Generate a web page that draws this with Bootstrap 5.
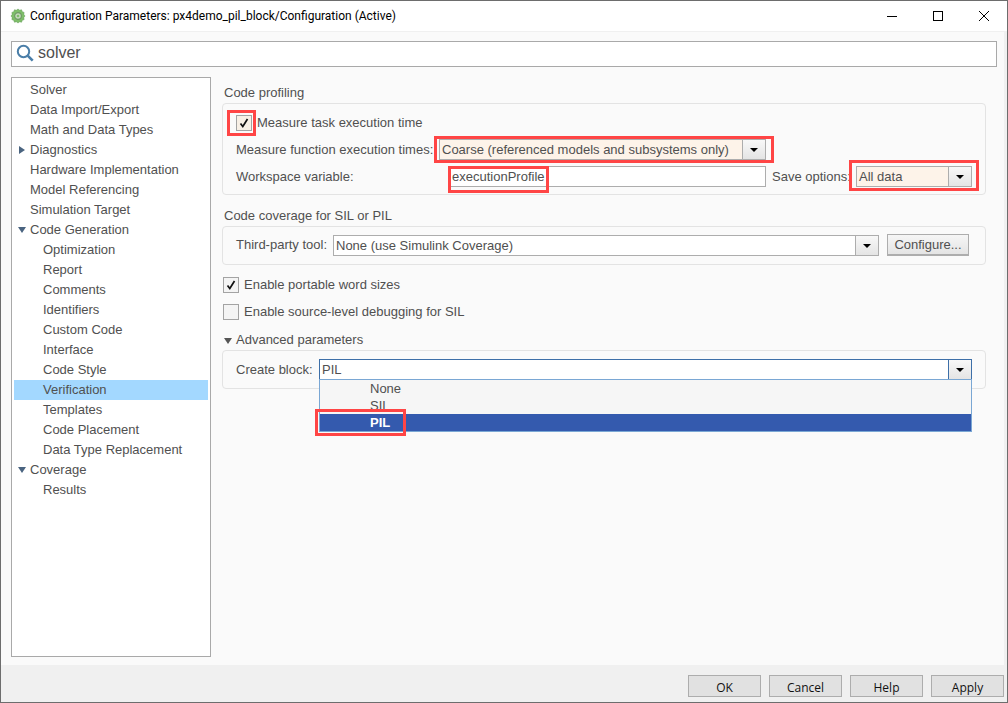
<!DOCTYPE html>
<html lang="en">
<head>
<meta charset="utf-8">
<title>Configuration Parameters</title>
<link rel="stylesheet" href="https://cdn.jsdelivr.net/npm/bootstrap@5.3.0/dist/css/bootstrap.min.css">
<style>
html,body{height:703px;overflow:hidden;background:#fff}
body{font:13px/20px "Liberation Sans",Arial,sans-serif;color:#505050}
.win{width:1008px;height:703px;border:1px solid #6d6d6d;background:#f0f0f0}
.tbar{height:30px;background:#fff;padding:0 0 0 9px;font:12px Roboto,"Noto Sans",sans-serif;color:#000}
.tbar .ttl{margin-left:4px}
.wbtn{width:46px;height:30px}
.fx0{flex:none}
.mainp{height:634px;margin:1px 3px 0 0;background:#fafafa;padding:9px 7px 8px 10px}
.srch{height:26px;border:1px solid #a9a9a9;background:#fff;padding-left:4px;padding-bottom:2px;gap:4px;font-size:16px;color:#505050}
.cols{margin-top:10px;gap:11px;height:580px}
.tree{width:200px;height:580px;border:1px solid #a9a9a9;background:#fff;padding:2px;flex:none}
.tree .list-group-item{border:0;border-radius:0;padding:0 0 0 16px;height:20px;line-height:20px;background:transparent;color:#505050;font-size:13px;position:relative}
.tree .list-group-item.lv2{padding-left:29px}
.tree .list-group-item.sel{background:#a3d8ff}
.tw{position:absolute;left:4px;top:6px;width:8px;height:8px}
.pane{width:764px;flex:none;padding-top:5px}
.lgd{height:20px;line-height:22px;padding-left:2px}
.grp{border:1px solid #e3e3e3;border-radius:4px;background:#fafafa;padding:0 13px}
.g1{height:92px;margin-top:1px}
.g2{height:39px;margin-top:1px;padding-top:8px}
.g3{height:39px;margin-top:1px;padding-top:8px}
.lg2{margin-top:10px}
.rw{display:flex;align-items:center}
.r1{height:20px;margin-top:9px}
.r2{height:21px;margin-top:6px}
.r3{height:21px;margin-top:6px}
.cb{width:16px;height:16px;border:1px solid #a3a3a3;background:#f4f4f4;display:inline-flex;align-items:center;justify-content:center;flex:none;position:relative}
.cb.warm{background:#f8f0e6}
.gap5{margin-left:5px}
.combo{display:flex;height:21px;border:1px solid #adadad;background:#fff;flex:none;position:relative}
.combo.warm .val{background:#fdf3e9}
.val{flex:1;padding-left:2px;line-height:19px;font-size:13px;color:#505050;white-space:nowrap}
.arr{width:23px;border-left:1px solid #adadad;background:linear-gradient(#f8f8f8,#e4e4e4);display:flex;align-items:center;justify-content:center;flex:none}
.arr i{display:block;width:0;height:0;border:4px solid transparent;border-top:4px solid #000;border-bottom:0;margin-top:1px}
.tinp{height:21px;border:1px solid #adadad;background:#fff;padding:0 0 0 1px;font-size:13px;color:#505050;border-radius:0;line-height:19px;flex:none;position:relative}
.cfg{width:82px;height:22px;border:1px solid #adadad;border-bottom-width:2px;border-radius:0;background:linear-gradient(#f6f6f6,#e4e4e4);font-size:13px;line-height:18px;padding:0;color:#505050;margin-left:8px}
.ck{height:16px}
.ck1{margin-top:12px}
.ck2{margin-top:11px}
.ck .cb{margin-left:1px;margin-right:5px}
.lg3{margin-top:9px;padding-left:2px}
.lg3 svg{margin-right:4px}
.ddown{position:absolute;left:-1px;top:19px;width:653px;height:53px;border:1px solid #7aa7d4;background:#f6f6f6;z-index:5;font-size:13px}
.ddown div{height:17px;line-height:17px;padding-left:50px}
.ddown .d3{background:#345aae;color:#fff;font-weight:700}
.blue{border-color:#3d6fa8}
.blue .arr{border-left-color:#3d6fa8}
.hl{position:absolute;border:3px solid #ff4545;z-index:9;pointer-events:none}
.foot{height:37px;padding-top:10px;padding-right:3px;gap:8px;background:#f0f0f0}
.foot .btn{width:73px;height:22px;padding:3px 0 0;border:1px solid #adadad;border-radius:0;background:#e1e1e1;color:#111;font:12px/17px "Open Sans","Noto Sans",sans-serif}
.wl1{width:203px}.wl2{width:214px}.wl3{width:90px;padding-left:6px;white-space:nowrap}
.wl4{width:97px}.wl5{width:83px}
.up1{margin-top:-1px}
</style>
</head>
<body>
<div class="win d-flex flex-column">
  <div class="tbar d-flex align-items-center fx0">
    <svg width="16" height="16" viewBox="0 0 16 16"><path d="M8 1l1.600 1.200 2-.4.6 1.900 1.900.7-.3 2L15 8l-1.200 1.600.3 2-1.900.7-.6 1.900-2-.4L8 15l-1.600-1.200-2 .4-.6-1.900-1.900-.7.3-2L1 8l1.200-1.600-.3-2 1.900-.7.6-1.900 2 .4z" fill="#7fbf6a" stroke="#5d9450" stroke-width=".5"/><circle cx="8" cy="8" r="3.400" fill="#c4d8bc" stroke="#6f9a64" stroke-width="1.200"/><circle cx="8" cy="8" r="1.300" fill="#7fbf6a"/></svg>
    <span class="ttl flex-grow-1">Configuration Parameters: px4demo_pil_block/Configuration (Active)</span>
    <div class="wbtn d-flex align-items-center justify-content-center"><svg width="12" height="12" viewBox="0 0 12 12"><path d="M1 6.500h10" stroke="#000" fill="none"/></svg></div>
    <div class="wbtn d-flex align-items-center justify-content-center"><svg width="12" height="12" viewBox="0 0 12 12"><rect x="1.500" y="1.500" width="9" height="9" stroke="#000" fill="none"/></svg></div>
    <div class="wbtn d-flex align-items-center justify-content-center"><svg width="12" height="12" viewBox="0 0 12 12"><path d="M1 1l10 10M11 1L1 11" stroke="#000" fill="none"/></svg></div>
  </div>
  <div class="mainp">
    <div class="srch d-flex align-items-center">
      <svg width="18" height="18" viewBox="0 0 18 18"><circle cx="7.500" cy="7.500" r="5.700" fill="none" stroke="#4a7ea8" stroke-width="2"/><path d="M11.700 11.700l5 5" stroke="#4a7ea8" stroke-width="2.600"/></svg>
      <span>solver</span>
    </div>
    <div class="cols d-flex">
      <div class="tree list-group rounded-0">
        <div class="list-group-item">Solver</div>
        <div class="list-group-item">Data Import/Export</div>
        <div class="list-group-item">Math and Data Types</div>
        <div class="list-group-item"><svg class="tw" viewBox="0 0 8 8"><path d="M1 0l6 4-6 4z" fill="#4a6480"/></svg>Diagnostics</div>
        <div class="list-group-item">Hardware Implementation</div>
        <div class="list-group-item">Model Referencing</div>
        <div class="list-group-item">Simulation Target</div>
        <div class="list-group-item"><svg class="tw" viewBox="0 0 8 8"><path d="M0 1h8L4 7z" fill="#4a6480"/></svg>Code Generation</div>
        <div class="list-group-item lv2">Optimization</div>
        <div class="list-group-item lv2">Report</div>
        <div class="list-group-item lv2">Comments</div>
        <div class="list-group-item lv2">Identifiers</div>
        <div class="list-group-item lv2">Custom Code</div>
        <div class="list-group-item lv2">Interface</div>
        <div class="list-group-item lv2">Code Style</div>
        <div class="list-group-item lv2 sel">Verification</div>
        <div class="list-group-item lv2">Templates</div>
        <div class="list-group-item lv2">Code Placement</div>
        <div class="list-group-item lv2">Data Type Replacement</div>
        <div class="list-group-item"><svg class="tw" viewBox="0 0 8 8"><path d="M0 1h8L4 7z" fill="#4a6480"/></svg>Coverage</div>
        <div class="list-group-item lv2">Results</div>
      </div>
      <div class="pane">
        <div class="lgd">Code profiling</div>
        <div class="grp g1">
          <div class="rw r1">
            <span class="cb warm"><svg width="12" height="12" viewBox="0 0 12 12"><path d="M2.500 6.500l2.300 3L9.500 2" fill="none" stroke="#111" stroke-width="1.700"/></svg><span class="hl" style="left:-10px;top:-6px;width:29px;height:26px"></span></span>
            <span class="gap5">Measure task execution time</span>
          </div>
          <div class="rw r2">
            <span class="wl1 fx0">Measure function execution times:</span>
            <div class="combo warm" style="width:327px"><div class="val">Coarse (referenced models and subsystems only)</div><div class="arr"><i></i></div><span class="hl" style="left:-6px;top:-4px;width:340px;height:27px"></span></div>
          </div>
          <div class="rw r3">
            <span class="wl2 fx0">Workspace variable:</span>
            <div class="tinp" style="width:316px">executionProfile<span class="hl" style="left:-3px;top:-1px;width:101px;height:27px"></span></div>
            <span class="wl3 fx0">Save options:</span>
            <div class="combo warm" style="width:116px"><div class="val">All data</div><div class="arr"><i></i></div><span class="hl" style="left:-8px;top:-7px;width:130px;height:31px"></span></div>
          </div>
        </div>
        <div class="lgd lg2">Code coverage for SIL or PIL</div>
        <div class="grp g2">
          <div class="rw up1">
            <span class="wl4 fx0">Third-party tool:</span>
            <div class="combo" style="width:546px"><div class="val">None (use Simulink Coverage)</div><div class="arr"><i></i></div></div>
            <button type="button" class="btn cfg">Configure...</button>
          </div>
        </div>
        <div class="rw ck ck1"><span class="cb"><svg width="12" height="12" viewBox="0 0 12 12"><path d="M2.500 6.500l2.300 3L9.500 2" fill="none" stroke="#111" stroke-width="1.700"/></svg></span><span>Enable portable word sizes</span></div>
        <div class="rw ck ck2"><span class="cb"></span><span>Enable source-level debugging for SIL</span></div>
        <div class="lgd lg3"><svg width="8" height="8" viewBox="0 0 8 8"><path d="M0 1h8L4 7z" fill="#555"/></svg>Advanced parameters</div>
        <div class="grp g3">
          <div class="rw">
            <span class="wl5 fx0">Create block:</span>
            <div class="combo blue" style="width:653px"><div class="val">PIL</div><div class="arr"><i></i></div>
              <div class="ddown">
                <div>None</div>
                <div>SIL</div>
                <div class="d3">PIL</div>
                <span class="hl" style="left:-5px;top:29px;width:91px;height:27px"></span>
              </div>
            </div>
          </div>
        </div>
      </div>
    </div>
  </div>
  <div class="foot d-flex justify-content-end">
    <button type="button" class="btn">OK</button>
    <button type="button" class="btn">Cancel</button>
    <button type="button" class="btn">Help</button>
    <button type="button" class="btn">Apply</button>
  </div>
</div>
</body>
</html>
